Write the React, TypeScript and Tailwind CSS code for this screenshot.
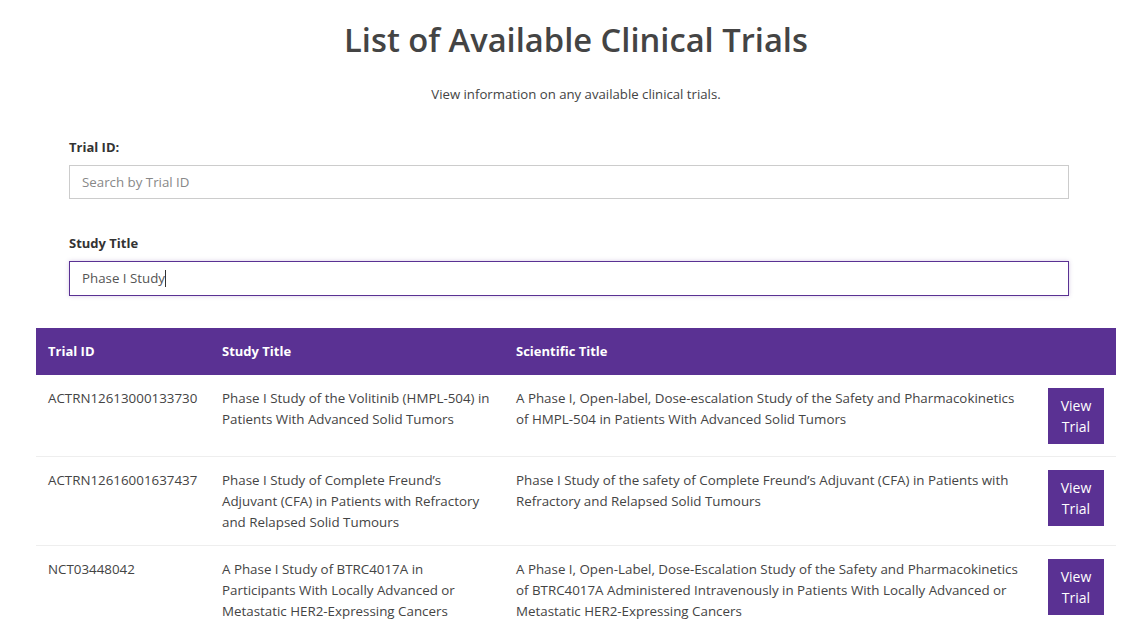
import React from "react";

const PURPLE = "bg-[#5a3193]";

const rows = [
  {
    id: "ACTRN12613000133730",
    study: "Phase I Study of the Volitinib (HMPL-504) in Patients With Advanced Solid Tumors",
    sci: "A Phase I, Open-label, Dose-escalation Study of the Safety and Pharmacokinetics of HMPL-504 in Patients With Advanced Solid Tumors",
  },
  {
    id: "ACTRN12616001637437",
    study: "Phase I Study of Complete Freund’s Adjuvant (CFA) in Patients with Refractory and Relapsed Solid Tumours",
    sci: "Phase I Study of the safety of Complete Freund’s Adjuvant (CFA) in Patients with Refractory and Relapsed Solid Tumours",
  },
  {
    id: "NCT03448042",
    study: "A Phase I Study of BTRC4017A in Participants With Locally Advanced or Metastatic HER2-Expressing Cancers",
    sci: "A Phase I, Open-Label, Dose-Escalation Study of the Safety and Pharmacokinetics of BTRC4017A Administered Intravenously in Patients With Locally Advanced or Metastatic HER2-Expressing Cancers",
  },
];

export default function App() {
  return (
    <div
      className="min-h-[634px] bg-white text-[#444] px-[36px] pr-[14px] text-[14px] leading-[21px]"
      style={{ fontFamily: '"Open Sans", "Noto Sans", sans-serif' }}
    >
      <h1 className="pt-[18px] text-center text-[32.7px] leading-[44px] font-semibold text-[#444]">
        List of Available Clinical Trials
      </h1>
      <p className="mt-[22px] text-center text-[13.2px] text-[#444]">View information on any available clinical trials.</p>

      <div className="ml-[33px] w-[1000px] mt-[32px]">
        <label className="block font-bold text-[#333] text-[13px]">Trial ID:</label>
        <input
          className="mt-[7px] block w-full h-[34px] border border-[#ccc] px-[12px] text-[13.3px] outline-none placeholder:text-[#888]"
          placeholder="Search by Trial ID"
        />
        <label className="block mt-[34px] font-bold text-[#333] text-[13px]">Study Title</label>
        <div className="mt-[7px] h-[35px] w-full border border-[#5a3193] shadow-[0_0_4px_rgba(90,49,147,0.25)] px-[12px] flex items-center text-[13.3px] text-[#555]">
          <span>Phase I Study</span>
          <span className="w-px h-[17px] bg-[#333]" />
        </div>
      </div>

      <table className="mt-[32px] w-[1080px] table-fixed border-collapse text-[13.35px]">
        <colgroup>
          <col className="w-[174px]" />
          <col className="w-[294px]" />
          <col className="w-[532px]" />
          <col className="w-[80px]" />
        </colgroup>
        <thead>
          <tr className={`${PURPLE} text-white`}>
            <th className="text-left font-bold px-[12px] py-[13px] text-[13px]">Trial ID</th>
            <th className="text-left font-bold px-[12px] py-[13px] text-[13px]">Study Title</th>
            <th className="text-left font-bold px-[12px] py-[13px] text-[13px]">Scientific Title</th>
            <th className="px-[12px] py-[13px]" />
          </tr>
        </thead>
        <tbody>
          {rows.map((r) => (
            <tr key={r.id} className="border-b border-[#eee] align-top">
              <td className="px-[12px] pt-[13px] pb-[12px]">{r.id}</td>
              <td className="px-[12px] pt-[13px] pb-[12px]">{r.study}</td>
              <td className="px-[12px] pt-[13px] pb-[12px]">{r.sci}</td>
              <td className="px-[12px] pt-[13px] pb-[12px]">
                <button className={`${PURPLE} text-white w-[56px] h-[56px] flex flex-col items-center justify-center leading-[21px] text-[14px]`}>
                  <span>View</span>
                  <span>Trial</span>
                </button>
              </td>
            </tr>
          ))}
        </tbody>
      </table>
    </div>
  );
}
